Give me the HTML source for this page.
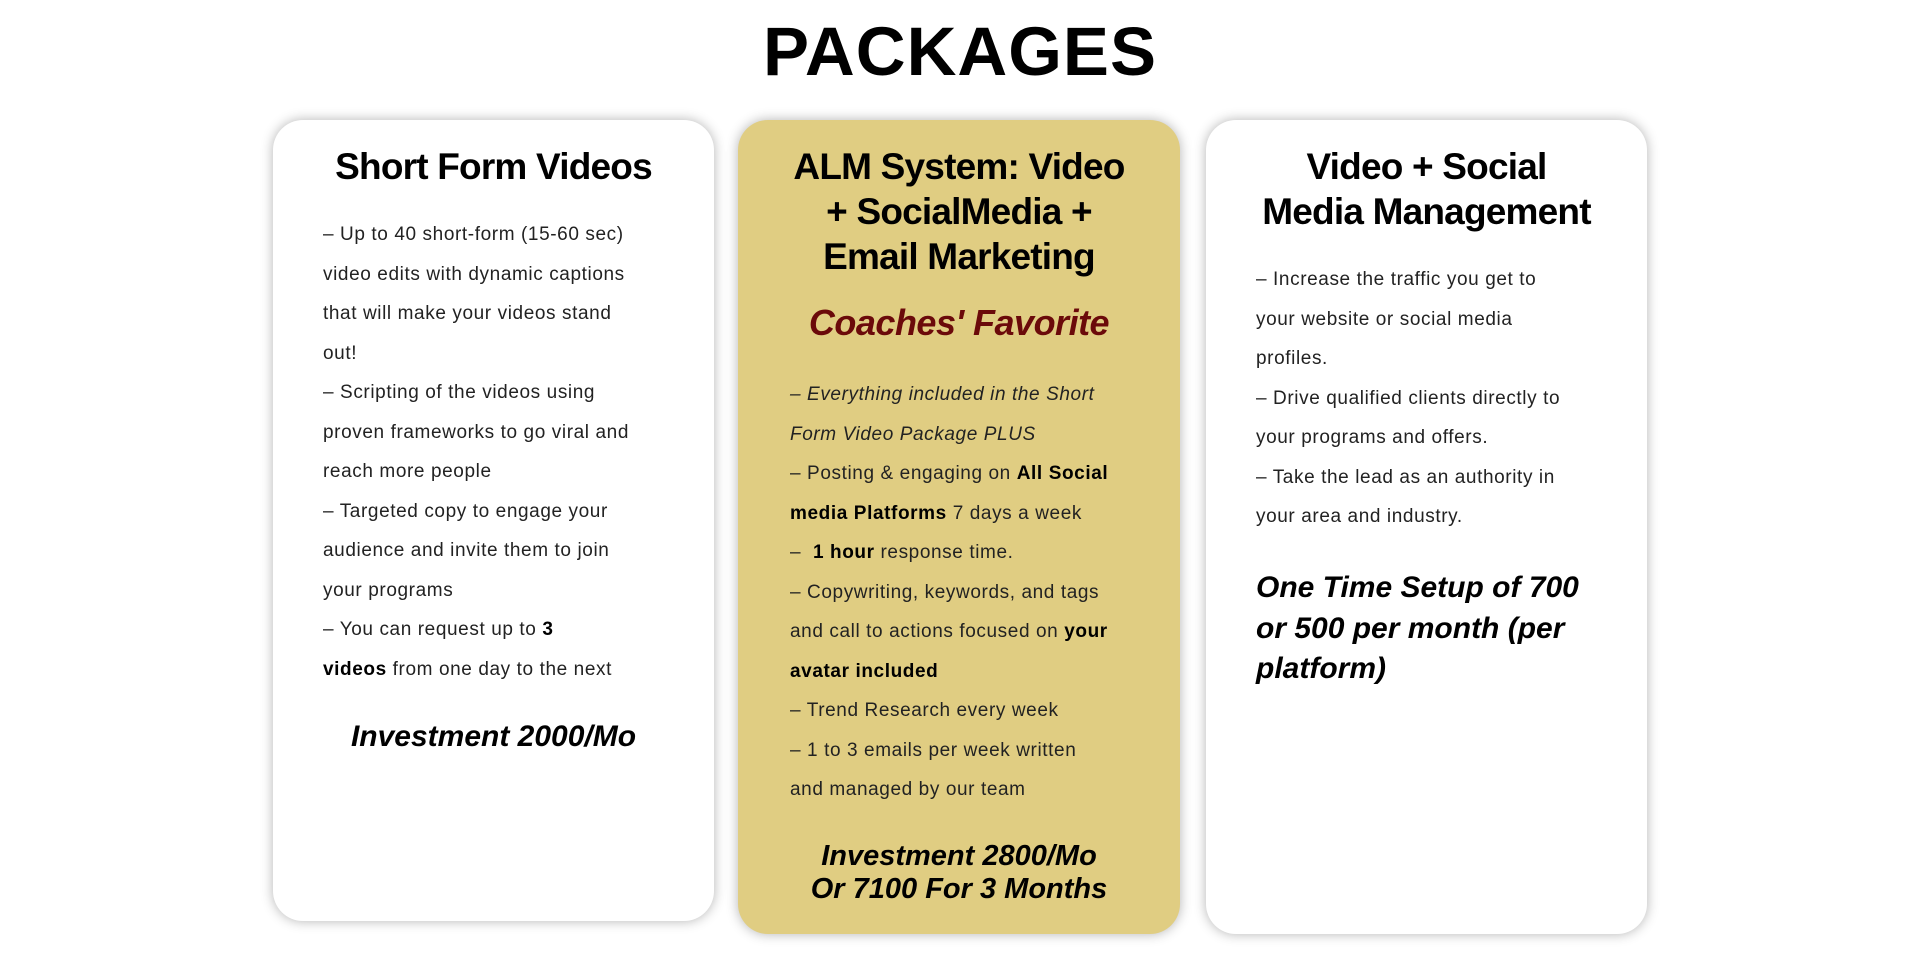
<!DOCTYPE html>
<html><head><meta charset="utf-8"><style>
*{margin:0;padding:0;box-sizing:border-box}
body{width:1920px;height:971px;background:#fff;font-family:"Liberation Sans",sans-serif;color:#111;position:relative;overflow:hidden}
h1{position:absolute;top:12px;left:0;width:1920px;text-align:center;font-size:69px;font-weight:900;letter-spacing:1px;color:#000}
.card{position:absolute;top:120px;border-radius:30px;background:#fff;box-shadow:0 0 12px rgba(0,0,0,.3)}
.t{font-weight:bold;font-size:37px;line-height:45px;text-align:center;color:#000;letter-spacing:-0.8px}
.b{position:absolute;left:50px;font-size:19px;line-height:39.5px;color:#222;white-space:nowrap;letter-spacing:0.6px}
.b strong{color:#000}
.p{position:absolute;font-weight:bold;font-style:italic;color:#000;white-space:nowrap}
</style></head><body>
<h1>PACKAGES</h1>

<div class="card" style="left:273px;width:441px;height:801px">
<div class="t" style="margin-top:24px">Short Form Videos</div>
<div class="b" style="top:95px">– Up to 40 short-form (15-60 sec)<br>video edits with dynamic captions<br>that will make your videos stand<br>out!<br>– Scripting of the videos using<br>proven frameworks to go viral and<br>reach more people<br>– Targeted copy to engage your<br>audience and invite them to join<br>your programs<br>– You can request up to <strong>3</strong><br><strong>videos</strong> from one day to the next</div>
<div class="p" style="top:600px;left:0;width:441px;text-align:center;font-size:30px">Investment 2000/Mo</div>
</div>

<div class="card" style="left:738px;width:442px;height:814px;background:#e0cd82">
<div class="t" style="margin-top:24px">ALM System: Video<br>+ SocialMedia +<br>Email Marketing</div>
<div class="p" style="top:182px;left:0;width:442px;text-align:center;font-size:36px;color:#6b0a0a;letter-spacing:-0.5px">Coaches' Favorite</div>
<div class="b" style="top:255px;left:52px"><em>– Everything included in the Short<br>Form Video Package PLUS</em><br>– Posting &amp; engaging on <strong>All Social<br>media Platforms</strong> 7 days a week<br>–&nbsp; <strong>1 hour</strong> response time.<br>– Copywriting, keywords, and tags<br>and call to actions focused on <strong>your<br>avatar included</strong><br>– Trend Research every week<br>– 1 to 3 emails per week written<br>and managed by our team</div>
<div class="p" style="top:720px;left:0;width:442px;text-align:center;font-size:29px;line-height:33px">Investment 2800/Mo<br>Or 7100 For 3 Months</div>
</div>

<div class="card" style="left:1206px;width:441px;height:814px">
<div class="t" style="margin-top:24px">Video + Social<br>Media Management</div>
<div class="b" style="top:140px">– Increase the traffic you get to<br>your website or social media<br>profiles.<br>– Drive qualified clients directly to<br>your programs and offers.<br>– Take the lead as an authority in<br>your area and industry.</div>
<div class="p" style="top:448px;left:50px;font-size:30px;line-height:40.5px">One Time Setup of 700<br>or 500 per month (per<br>platform)</div>
</div>
</body></html>
